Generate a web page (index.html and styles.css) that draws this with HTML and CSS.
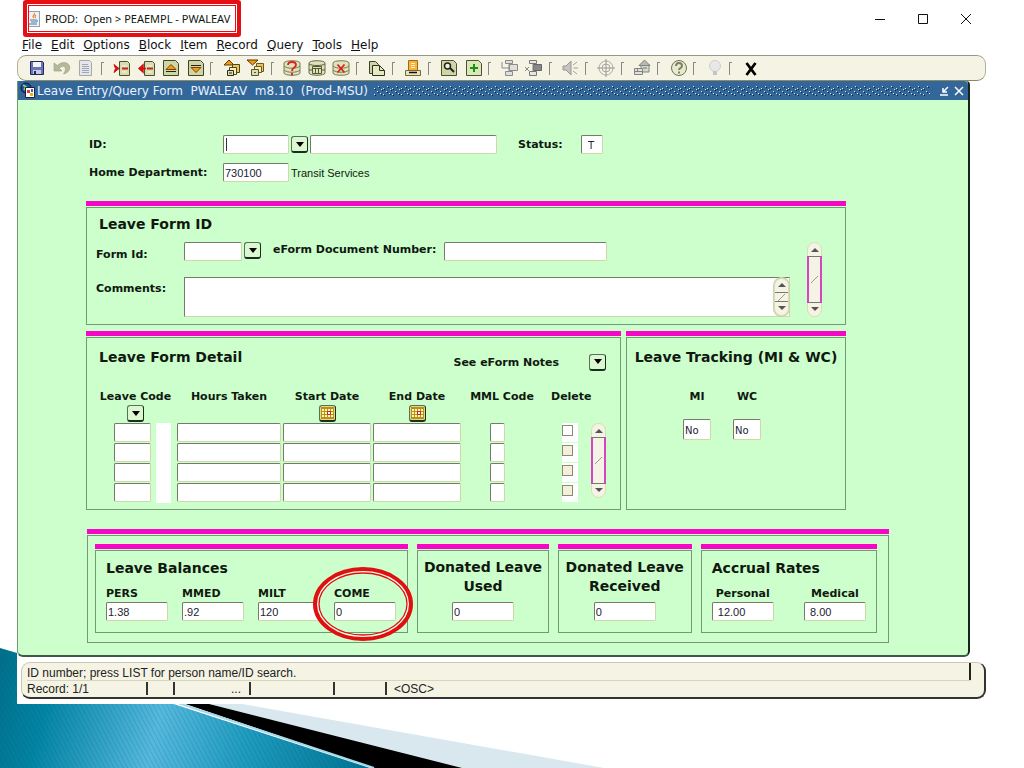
FILE: index.html
```html
<!DOCTYPE html>
<html lang="en">
<head>
<meta charset="utf-8">
<title>PROD: Open &gt; PEAEMPL - PWALEAV</title>
<link rel="stylesheet" href="styles.css">
</head>
<body>
<svg class="backdrop" viewBox="0 0 1024 120" preserveAspectRatio="xMinYMax slice" aria-hidden="true">
  <defs>
    <linearGradient id="teal" x1="0" y1="0" x2="370" y2="90" gradientUnits="userSpaceOnUse">
      <stop offset="0" stop-color="#006f8b"/><stop offset=".15" stop-color="#0384a3"/><stop offset=".45" stop-color="#56b9de"/><stop offset=".7" stop-color="#1d9abd"/><stop offset="1" stop-color="#017593"/>
    </linearGradient>
    <pattern id="weave" width="4" height="6" patternUnits="userSpaceOnUse" patternTransform="rotate(-28)"><path d="M0 0v6" stroke="#00566e" stroke-opacity=".35"/></pattern>
  </defs>
  <path d="M0 0L17 5 370 120H0z" fill="url(#teal)"/>
  <path d="M0 0L17 5 370 120H0z" fill="url(#weave)"/>
  <path d="M209 56L180 45 604 120H440z" fill="#d9e8ef"/>
  <path d="M150 44L209 56 462 120H374z" fill="#000"/>
  <path d="M160 49L374 120" stroke="#a6d8ea" stroke-width="2"/>
</svg>
<main class="app">
  <header class="titlebar">
    <h1 class="callout">
      <svg width="12" height="16" viewBox="0 0 12 16"><rect x=".5" y=".5" width="11" height="15" fill="#eef2f6" stroke="#8ba3b8"/><path d="M6 2c2 2-3 3 0 5M8 4c-2 1 0 2-1 3" fill="none" stroke="#e8822a" stroke-width="1.2"/><path d="M2 9h6M3 11h5M1 13h8M8 9c2 0 2 2 0 2" fill="none" stroke="#4d7899"/></svg>
      <span>PROD:&nbsp; Open &gt; PEAEMPL - PWALEAV</span>
    </h1>
    <div class="win-buttons">
      <button aria-label="Minimize"><svg width="12" height="12"><path d="M1 6.500h10" stroke="#111"/></svg></button>
      <button aria-label="Maximize"><svg width="12" height="12"><path d="M1.500 1.500h9v9h-9z" fill="none" stroke="#111"/></svg></button>
      <button aria-label="Close"><svg width="12" height="12"><path d="M1 1l10 10M11 1L1 11" stroke="#111"/></svg></button>
    </div>
  </header>
  <nav class="menu">
    <a href="#"><u>F</u>ile</a><a href="#"><u>E</u>dit</a><a href="#"><u>O</u>ptions</a><a href="#"><u>B</u>lock</a><a href="#"><u>I</u>tem</a><a href="#"><u>R</u>ecord</a><a href="#"><u>Q</u>uery</a><a href="#"><u>T</u>ools</a><a href="#"><u>H</u>elp</a>
  </nav>
  <div class="toolbar">
    <div class="tools">
      <button aria-label="Save"><svg viewBox="0 0 18 18"><path d="M2.500 2.500h12l1 1v12h-13z" fill="#6a74b8" stroke="#23285e"/><path d="M5 3h8v5H5z" fill="#f2f4fa"/><path d="M5 11h8v4H5z" fill="#c9cde4"/><path d="M6 12h2v3H6z" fill="#23285e"/></svg></button>
      <button aria-label="Undo"><svg viewBox="0 0 18 18"><path d="M1 4v8h8L6.500 9.500C9 6 12.500 7 12.500 10c0 2-1 3-2 5 5-1 7-5 6-8-2-5-9-4-12-.500z" fill="#b4b99c" stroke="#949a80" stroke-width=".6"/></svg></button>
      <button aria-label="Rollback"><svg viewBox="0 0 18 18"><path d="M2.500 1.500h10l2 2v13h-12z" fill="#e4e6ea" stroke="#a6a8ac"/><path d="M5 5.500h6M5 7.500h7M5 9.500h7M5 11.500h7M5 13.500h7" stroke="#a2a6ae"/></svg></button>
      <i class="sep"></i>
      <button aria-label="Insert record"><svg viewBox="0 0 18 18"><path d="M6.500 2.500h8l2 2v12h-10z" fill="#d5dcae" stroke="#4a5030"/><path d="M9 7h5M9 13h5" stroke="#f6f8e0"/><path d="M9 9.500h6" stroke="#c22" stroke-width="2"/><path d="M1 5.500l5 4-5 4 1.500-4z" fill="#d11" stroke="#c11"/></svg></button>
      <button aria-label="Remove record"><svg viewBox="0 0 18 18"><path d="M6.500 2.500h8l2 2v12h-10z" fill="#d5dcae" stroke="#4a5030"/><path d="M9 7h5M9 13h5" stroke="#f6f8e0"/><path d="M9 9.500h6" stroke="#c22" stroke-width="2"/><path d="M1 9.500L5 6v7zM4 9.500h4" fill="#d11" stroke="#c11" stroke-width="1.500"/></svg></button>
      <button aria-label="Previous record"><svg viewBox="0 0 18 18"><path d="M1.500 1.500h12l3 3v12h-15z" fill="#cdd6a4" stroke="#3f4628"/><path d="M4 12.500h10" stroke="#222"/><path d="M4 10.500l5-5 5 5z" fill="#f79b16" stroke="#7a4500"/></svg></button>
      <button aria-label="Next record"><svg viewBox="0 0 18 18"><path d="M1.500 1.500h12l3 3v12h-15z" fill="#cdd6a4" stroke="#3f4628"/><path d="M4 6.500h10" stroke="#222"/><path d="M4 8.500h10l-5 5z" fill="#f79b16" stroke="#7a4500"/></svg></button>
      <i class="sep"></i>
      <button aria-label="Previous block"><svg viewBox="0 0 18 18"><path d="M1 6l5-5 5 5z" fill="#f79b16" stroke="#5d3500"/><path d="M9.500 5.500h7v8h-7z" fill="#e9c56a" stroke="#514412"/><path d="M6.500 8.500h7v7h-7z" fill="#f5edc0" stroke="#514412"/><path d="M4.500 11.500h6v5h-6zM6 14h3" fill="#d9dfb0" stroke="#2c2c18"/></svg></button>
      <button aria-label="Next block"><svg viewBox="0 0 18 18"><path d="M9.500 4.500h7v8h-7z" fill="#e9c56a" stroke="#6b5a18"/><path d="M7.500 7.500h7v6h-7z" fill="#f5edc0" stroke="#6b5a18"/><path d="M4.500 10.500h7v6h-7zM7 13.500h2" fill="#d9dfb0" stroke="#55552c"/><path d="M0 1h11L5.500 6z" fill="#f79b16" stroke="#5d3500"/></svg></button>
      <i class="sep"></i>
      <button aria-label="Enter query"><svg viewBox="0 0 18 18"><path d="M1 4c0-3 16-3 16 0v10c0 3-16 3-16 0z" fill="#dfe3bd" stroke="#777c52"/><path d="M1 7c3 3 13 3 16 0M1 11c3 3 13 3 16 0" fill="none" stroke="#777c52"/><path d="M5 6c0-4 8-4 8 0 0 3-4 2-4 6M9 14v2.500" fill="none" stroke="#dc2020" stroke-width="1.800"/></svg></button>
      <button aria-label="Execute query"><svg viewBox="0 0 18 18"><path d="M1 4c0-3 16-3 16 0v10c0 3-16 3-16 0z" fill="#dfe3bd" stroke="#686d42"/><path d="M1 5c3 2 13 2 16 0M1 11h3M14 11h3M4.500 7.500h9v7h-9zM4.500 9.500h9M7.500 9.500v5M10.500 9.500v5" fill="none" stroke="#555b34"/></svg></button>
      <button aria-label="Cancel query"><svg viewBox="0 0 18 18"><path d="M1 4c0-3 16-3 16 0v10c0 3-16 3-16 0z" fill="#dfe3bd" stroke="#777c52"/><path d="M1 7c3 3 13 3 16 0M1 11c3 3 13 3 16 0" fill="none" stroke="#777c52"/><path d="M5.500 5.500l7 8M12.500 5.500l-7 8" stroke="#dc2020" stroke-width="1.800"/></svg></button>
      <i class="sep"></i>
      <button aria-label="Document"><svg viewBox="0 0 18 18"><path d="M1.500 2.500h6l3 3v9h-9z" fill="#cdd6a4" stroke="#3c4126"/><path d="M4.500 6.500h7l5 5v5h-12z" fill="#e6eac4" stroke="#2f331c"/><path d="M11.500 6.500v5h5" fill="none" stroke="#2f331c"/></svg></button>
      <i class="sep"></i>
      <button aria-label="Print"><svg viewBox="0 0 18 18"><path d="M4.500 1.500h9v10h-9z" fill="#fbb03b" stroke="#a46a10"/><path d="M7 4.500h4M7 6.500h4M7 8.500h4" stroke="#fff3c0"/><path d="M1.500 11.500h15v5h-15z" fill="#e6e4b8" stroke="#6f6a3a"/><path d="M5 13.500h8" stroke="#111" stroke-width="1.500"/></svg></button>
      <i class="sep"></i>
      <button aria-label="View"><svg viewBox="0 0 18 18"><path d="M1.500 1.500h12l3 3v12h-15z" fill="#cdd6a4" stroke="#4c5230"/><circle cx="7.500" cy="7" r="3" fill="#eef0d8" stroke="#222" stroke-width="1.500"/><path d="M10 9l4 4" stroke="#222" stroke-width="2"/></svg></button>
      <button aria-label="Add"><svg viewBox="0 0 18 18"><path d="M1.500 1.500h12l3 3v12h-15z" fill="#dbe6b8" stroke="#4c5230"/><path d="M9 5v8M5 9h8" stroke="#159315" stroke-width="2"/></svg></button>
      <i class="sep"></i>
      <button aria-label="Workflow submit"><svg viewBox="0 0 18 18"><path d="M1 3v6h7M8 5v7" fill="none" stroke="#8b8b88"/><path d="M4.500 1.500h7v3h-7zM8.500 5.500h8v6h-8zM4.500 12.500h7v4h-7z" fill="#dededa" stroke="#8b8b88"/></svg></button>
      <button aria-label="Workflow release"><svg viewBox="0 0 18 18"><path d="M4.500 1.500h7v3h-7zM4.500 12.500h7v4h-7z" fill="#e8e8e0" stroke="#777"/><path d="M8.500 5.500h8v6h-8z" fill="#888" stroke="#666"/><path d="M0 8l4 4M4 8l-4 4M8 5v7" stroke="#888"/></svg></button>
      <i class="sep"></i>
      <button aria-label="Broadcast"><svg viewBox="0 0 18 18"><path d="M2 7h3l5-5v14l-5-5H2z" fill="#c4c4c0" stroke="#969694"/><path d="M12 6l4-3M12.500 9H17M12 12l4 3" stroke="#a0a09c"/></svg></button>
      <i class="sep"></i>
      <button aria-label="Target"><svg viewBox="0 0 18 18"><circle cx="9" cy="9" r="7" fill="none" stroke="#aaa9a5"/><circle cx="9" cy="9" r="4" fill="none" stroke="#aaa9a5"/><path d="M9 0v18M0 9h18" stroke="#999894"/></svg></button>
      <i class="sep"></i>
      <button aria-label="Home"><svg viewBox="0 0 18 18"><path d="M8 6v7h8V5" fill="#d6d6d2" stroke="#83837f"/><path d="M6 6.500l5.500-5.500L17 6.500z" fill="#b8b8b4" stroke="#83837f"/><path d="M10 9h4" stroke="#777"/><path d="M1.500 9.500h8v6h-8zM1 12.500h9M4.500 9v3" fill="#e1e1dc" stroke="#83837f"/></svg></button>
      <i class="sep"></i>
      <button aria-label="Help"><svg viewBox="0 0 18 18"><circle cx="9" cy="9" r="7.500" fill="#e8ead0" stroke="#6f7454"/><path d="M6 7c0-4 6-4 6 0 0 2-3 2-3 4M9 12.500v2" fill="none" stroke="#7c8160" stroke-width="2"/></svg></button>
      <i class="sep"></i>
      <button aria-label="Hint"><svg viewBox="0 0 18 18"><circle cx="9" cy="7" r="5.500" fill="#e8e8e8" stroke="#cfcfcf"/><path d="M7 12h4v4H7z" fill="#c4c4c4"/></svg></button>
      <i class="sep"></i>
      <button aria-label="Exit"><svg viewBox="0 0 18 18"><path d="M4.500 4l9 12M13.500 4l-9 12" stroke="#000" stroke-width="2.800"/></svg></button>
    </div>
  </div>

  <section class="form-window">
    <div class="form-title">
      <svg width="16" height="17" viewBox="0 0 16 17"><circle cx="6" cy="6" r="5" fill="#234a9c" stroke="#0a183c"/><path d="M3 3l3 2-2 3" stroke="#7ad07a" stroke-width="2" fill="none"/><path d="M5.500 5.500h9v10h-9z" fill="#fff" stroke="#222"/><path d="M7 8h3v3H7z" fill="#e33"/><path d="M10 11h3v3h-3z" fill="#e9b21c"/><path d="M11 7h2v3h-2z" fill="#36c"/></svg>
      <h2>Leave Entry/Query Form&nbsp; PWALEAV&nbsp; m8.10&nbsp; (Prod-MSU)</h2>
      <svg class="grip" height="12"><defs><pattern id="dots" width="9" height="12" patternUnits="userSpaceOnUse"><g fill="#0b2040"><path d="M1 4h1v1H1zM4 7h1v1H4zM1 10h1v1H1zM5 2h1v1H5zM8 5h1v1H8zM7 9h1v1H7z"/></g><g fill="#d3f0ea"><path d="M0 3h1v1H0zM3 6h1v1H3zM0 9h1v1H0zM4 1h1v1H4zM7 4h1v1H7zM6 8h1v1H6z"/></g></pattern></defs><rect width="100%" height="12" fill="url(#dots)"/></svg>
      <button aria-label="Restore form"><svg width="10" height="10"><path d="M9 1L4 6M4 2v4h4M1 9h8" fill="none" stroke="#fff" stroke-width="1.500"/></svg></button>
      <button aria-label="Close form"><svg width="10" height="10"><path d="M1 1l8 8M9 1L1 9" stroke="#fff" stroke-width="1.500"/></svg></button>
    </div>

    <form class="form-body">
      <div class="key-row">
        <label class="key-label" for="pid">ID:</label>
        <input class="field w-key caret" id="pid">
        <button type="button" class="lov" aria-label="List IDs"></button>
        <input class="field w-name" aria-label="Name">
        <label class="status-label" for="status">Status:</label>
        <input class="field w-flag" id="status" value="T">
      </div>
      <div class="key-row">
        <label class="key-label" for="dept">Home Department:</label>
        <input class="field w-key" id="dept" value="730100">
        <span class="small">Transit Services</span>
      </div>

      <section class="panel form-id">
        <div class="frame with-scroll">
          <div class="grow">
            <h3>Leave Form ID</h3>
            <div class="id-row">
              <label class="id-label low" for="formid">Form Id:</label>
              <input class="field w-form" id="formid">
              <button type="button" class="lov" aria-label="List forms"></button>
              <label class="doc-label" for="docno">eForm Document Number:</label>
              <input class="field w-doc" id="docno">
            </div>
            <div class="id-row">
              <label class="id-label" for="comments">Comments:</label>
              <div class="comment-box">
                <textarea id="comments"></textarea>
                <div class="mini-scroll"><b class="up"></b><b class="thumb"></b><b class="down"></b></div>
              </div>
            </div>
          </div>
          <div class="scroll"><b class="up"></b><b class="thumb"></b><b class="down"></b></div>
        </div>
      </section>

      <div class="middle">
        <section class="panel">
          <div class="frame detail">
            <div class="detail-head">
              <h3>Leave Form Detail</h3>
              <label for="notes">See eForm Notes</label>
              <button type="button" id="notes" class="lov"></button>
            </div>
            <div class="table-row">
              <table>
                <colgroup><col class="c-code"><col class="c-hours"><col class="c-date"><col class="c-date"><col class="c-mml"><col class="c-del"></colgroup>
                <thead><tr>
                  <th>Leave Code<button type="button" class="lov" aria-label="List leave codes"></button></th>
                  <th>Hours Taken</th>
                  <th>Start Date<button type="button" class="cal" aria-label="Pick start date"><svg width="13" height="12"><path d="M0 0h13v12H0z" fill="#b8901c"/><path d="M1 2h2v2H1zM4 2h2v2H4zM7 2h2v2H7zM10 2h2v2h-2zM1 5h2v2H1zM4 5h2v2H4zM10 5h2v2h-2zM1 8h2v2H1zM4 8h2v2H4zM7 8h2v2H7zM10 8h2v2h-2z" fill="#fff8b0"/><path d="M6.500 4.500h3v3h-3z" fill="#fff" stroke="#c22"/></svg></button></th>
                  <th>End Date<button type="button" class="cal" aria-label="Pick end date"><svg width="13" height="12"><path d="M0 0h13v12H0z" fill="#b8901c"/><path d="M1 2h2v2H1zM4 2h2v2H4zM7 2h2v2H7zM10 2h2v2h-2zM1 5h2v2H1zM4 5h2v2H4zM10 5h2v2h-2zM1 8h2v2H1zM4 8h2v2H4zM7 8h2v2H7zM10 8h2v2h-2z" fill="#fff8b0"/><path d="M6.500 4.500h3v3h-3z" fill="#fff" stroke="#c22"/></svg></button></th>
                  <th>MML Code</th>
                  <th>Delete</th>
                </tr></thead>
                <tbody>
                  <tr><td><div class="code"><input class="field" aria-label="Leave code 1"><i></i></div></td><td><input class="field" aria-label="Hours 1"></td><td><input class="field" aria-label="Start 1"></td><td><input class="field" aria-label="End 1"></td><td class="mml"><input class="field" aria-label="MML 1"></td><td><span class="tick"><input type="checkbox" aria-label="Delete 1"></span></td></tr>
                  <tr><td><div class="code"><input class="field" aria-label="Leave code 2"><i></i></div></td><td><input class="field" aria-label="Hours 2"></td><td><input class="field" aria-label="Start 2"></td><td><input class="field" aria-label="End 2"></td><td class="mml"><input class="field" aria-label="MML 2"></td><td><span class="tick off"><input type="checkbox" aria-label="Delete 2"></span></td></tr>
                  <tr><td><div class="code"><input class="field" aria-label="Leave code 3"><i></i></div></td><td><input class="field" aria-label="Hours 3"></td><td><input class="field" aria-label="Start 3"></td><td><input class="field" aria-label="End 3"></td><td class="mml"><input class="field" aria-label="MML 3"></td><td><span class="tick off"><input type="checkbox" aria-label="Delete 3"></span></td></tr>
                  <tr><td><div class="code"><input class="field" aria-label="Leave code 4"><i></i></div></td><td><input class="field" aria-label="Hours 4"></td><td><input class="field" aria-label="Start 4"></td><td><input class="field" aria-label="End 4"></td><td class="mml"><input class="field" aria-label="MML 4"></td><td><span class="tick off"><input type="checkbox" aria-label="Delete 4"></span></td></tr>
                </tbody>
              </table>
              <div class="scroll"><b class="up"></b><b class="thumb"></b><b class="down"></b></div>
            </div>
          </div>
        </section>
        <section class="panel">
          <div class="frame tracking">
            <h3>Leave Tracking (MI &amp; WC)</h3>
            <div class="flags">
              <div class="flag"><label for="mi">MI</label><input class="field" id="mi" value="No"></div>
              <div class="flag"><label for="wc">WC</label><input class="field" id="wc" value="No"></div>
            </div>
          </div>
        </section>
      </div>

      <section class="panel totals">
        <div class="frame totals-grid">
          <section class="panel">
            <div class="frame sub">
              <h3>Leave Balances</h3>
              <div class="amounts">
                <div class="amount"><label for="pers">PERS</label><input class="field" id="pers" value="1.38"></div>
                <div class="amount"><label for="mmed">MMED</label><input class="field" id="mmed" value=".92"></div>
                <div class="amount"><label for="milt">MILT</label><input class="field" id="milt" value="120"></div>
                <div class="amount"><label for="come">COME</label><input class="field" id="come" value="0">
                  <svg class="ring" viewBox="0 0 100 74" aria-hidden="true"><ellipse cx="50" cy="37" rx="45" ry="32" fill="none" stroke="#f4fff0" stroke-width="2"/><ellipse cx="50" cy="37" rx="48" ry="35" fill="none" stroke="#e01010" stroke-width="4"/><ellipse cx="50" cy="37" rx="44" ry="31" fill="none" stroke="#e01010" stroke-width="1.300"/></svg>
                </div>
              </div>
            </div>
          </section>
          <section class="panel">
            <div class="frame sub donated">
              <h3><label for="used">Donated Leave<br>Used</label></h3>
              <input class="field" id="used" value="0">
            </div>
          </section>
          <section class="panel">
            <div class="frame sub donated">
              <h3><label for="received">Donated Leave<br>Received</label></h3>
              <input class="field" id="received" value="0">
            </div>
          </section>
          <section class="panel">
            <div class="frame sub accrual">
              <h3>Accrual Rates</h3>
              <div class="amounts">
                <div class="amount"><label for="personal">Personal</label><input class="field" id="personal" value="12.00"></div>
                <div class="amount"><label for="medical">Medical</label><input class="field" id="medical" value="8.00"></div>
              </div>
            </div>
          </section>
        </div>
      </section>
    </form>
  </section>

  <footer class="status">
    <div class="hint"><span>ID number; press LIST for person name/ID search.</span></div>
    <div class="cells"><span class="s1">Record: 1/1</span><span class="s2"></span><span class="s3">...</span><span class="s4"></span><span class="s5"></span><span>&lt;OSC&gt;</span></div>
  </footer>
</main>
</body>
</html>
```
FILE: styles.css
```css
* { box-sizing: border-box; }
body {
  margin: 0;
  min-height: 100vh;
  background: #fff;
  color: #101810;
  font: 12px "DejaVu Sans", Verdana, sans-serif;
}
button { margin: 0; padding: 0; border: 0; background: none; font: inherit; }
h1, h2, h3 { margin: 0; }
svg { display: block; }

.backdrop { position: fixed; left: 0; bottom: 0; width: 100%; height: 120px; }

.app { position: relative; margin: 0 38px 0 17px; padding-bottom: 5px; background: #fff; }

/* window chrome */
.titlebar { display: flex; justify-content: space-between; align-items: center; height: 37px; padding: 0 14px 0 6px; }
.callout {
  position: relative;
  display: flex; align-items: center; gap: 5px;
  height: 37px; padding: 0 7px 0 1px;
  border: 4px solid #e60f14; border-radius: 3px;
  font: 11px "Noto Sans", "Open Sans", sans-serif;
  white-space: nowrap;
}
.callout::after { content: ""; position: absolute; inset: 1px; border: 1px solid #e60f14; }
.win-buttons { display: flex; gap: 31px; }

.menu { display: flex; gap: 9px; height: 18px; padding-left: 5px; line-height: 16px; }
.menu a { color: #111; text-decoration: none; }

.toolbar { height: 26px; padding: 1px 9px; border: 1px solid; border-color: #99968a #b5b294 #8c8a66; border-radius: 9px; background: #f5f4e4; }
.tools { display: flex; justify-content: space-between; align-items: center; max-width: 734px; }
.tools button { width: 20px; height: 22px; padding: 2px 1px; }
.sep { width: 7px; height: 13px; border-left: 1px solid #888; background: linear-gradient(#888, #888) 0 0 / 2px 1px no-repeat; }

/* form window */
.form-window { margin-right: 16px; border: 1px solid #6f9a70; border-top: 0; border-right: 2px solid #14251a; border-bottom: 2px solid #3d5a45; border-radius: 0 4px 6px 6px; background: #ccffcc; }
.form-title { display: flex; align-items: center; gap: 5px; height: 19px; padding: 0 4px 0 2px; background: #336699; color: #e6f2ff; border-radius: 0 4px 0 0; }
.form-title h2 { margin-left: -4px; font-size: 12px; font-weight: normal; white-space: nowrap; }
.grip { flex: 1; min-width: 0; margin: 0 4px 0 1px; }

.form-body { padding: 35px 79px 12px 68px; font-size: 11px; font-weight: bold; }
.field, textarea {
  height: 19px; margin: 0; padding: 1px 0 0 1px;
  border: 1px solid; border-color: #77796b #cfd8a8 #cfd8a8 #77796b; border-radius: 2px;
  background: #fff; color: #223;
  font: 11px "Liberation Sans", Arial, sans-serif;
}
.small { font: 11px "Liberation Sans", Arial, sans-serif; }
.lov, .cal {
  flex: none; display: block; width: 17px; height: 17px;
  border: 1px solid #56705a; border-right-color: #16301c; border-bottom: 2px solid #16301c; border-radius: 3px;
  background: #dcf8d0;
}
.lov::before { content: ""; display: block; width: 0; margin: 0 auto; border: 4px solid transparent; border-top: 5px solid #000; border-bottom: 0; }
.cal { padding: 1px; background: #e6d885; overflow: hidden; }

.key-row { display: flex; align-items: center; gap: 2px; margin-bottom: 9px; padding-left: 3px; }
.key-label { width: 132px; }
.w-key { width: 66px; }
.caret { background: linear-gradient(#333, #333) 2px 2px / 1px 13px no-repeat #fff; }
.w-name { width: 187px; }
.status-label { width: 61px; margin-left: 19px; }
.w-flag { width: 22px; padding-left: 6px; }

.panel { padding-top: 1px; border-top: 5px solid #f806c8; }
.panel h3 { font-size: 14px; line-height: 20px; }
.frame { height: 100%; border: 1px solid #739a77; }

.form-id { margin: 19px 43px 6px 0; }
.with-scroll { display: flex; align-items: flex-end; gap: 17px; padding: 6px 23px 7px 9px; }
.grow { flex: 1; }
.grow h3 { padding-left: 3px; margin-bottom: 8px; }
.id-row { display: flex; gap: 2px; }
.id-row + .id-row { margin-top: 16px; }
.id-label { width: 86px; padding-top: 5px; }
.low { align-self: flex-end; }
.w-form { width: 58px; }
.doc-label { margin: 1px 6px 0 10px; }
.w-doc { width: 163px; }
.comment-box { display: flex; flex: 1; height: 40px; border: 1px solid; border-color: #77796b #cfd8a8 #cfd8a8 #77796b; background: #fff; }
.comment-box textarea { flex: 1; min-width: 0; height: 100%; border: 0; resize: none; }

/* scroll gutters */
.scroll, .mini-scroll { display: flex; flex-direction: column; width: 15px; height: 75px; border: 1px solid #d9dcb4; border-radius: 8px; background: #f5f4e4; }
.mini-scroll { height: 100%; box-shadow: 0 0 0 1px #cdd0a8; }
.up, .down { height: 13px; }
.up::before, .down::before { content: ""; display: block; width: 0; margin: 5px auto 0; border: 4px solid transparent; border-top-width: 0; border-bottom: 4px solid #555; }
.down::before { border-top: 4px solid #555; border-bottom-width: 0; margin-top: 4px; }
.thumb { flex: 1; margin: 0 -1px; border: 2px solid #d944c4; border-top: 1px solid #777; border-bottom: 1px solid #777; background: linear-gradient(135deg, transparent 43%, #999 44% 54%, transparent 55%) center / 7px 7px no-repeat #f5f4e4; }
.mini-scroll .thumb { border-left: 0; border-right: 0; margin: 0; }
.mini-scroll .up::before { margin-top: 4px; }

.middle { display: grid; grid-template-columns: 535fr 220fr; gap: 5px; margin: 0 43px 19px 0; }
.detail { padding: 9px 14px 6px 8px; }
.detail-head { display: flex; align-items: center; height: 30px; margin-bottom: 12px; }
.detail-head h3 { flex: 1; padding-left: 4px; margin-bottom: 10px; }
.detail-head label { margin-right: 30px; }
.table-row { display: flex; align-items: flex-end; justify-content: space-between; }
.table-row .scroll { margin-bottom: 5px; }
table { width: 496px; table-layout: fixed; border-collapse: collapse; }
.c-code { width: 81px; } .c-hours { width: 106px; } .c-date { width: 90px; } .c-mml { width: 80px; }
th { height: 34px; padding: 0; font-size: 11px; line-height: 16px; vertical-align: top; white-space: nowrap; }
th .lov, th .cal { margin: 0 auto; }
td { height: 20px; padding: 0 1px; line-height: 0; vertical-align: top; }
td .field { display: block; width: 100%; }
.mml { padding: 0 40px 0 28px; }
td.mml .field { width: 15px; }
th:last-child { padding-left: 9px; }
td:last-child { padding-left: 20px; }
.code { display: flex; gap: 5px; padding-left: 18px; }
.code .field { width: 37px; }
.code i { width: 15px; height: 20px; background: #fff; }
.tick { display: block; width: 16px; height: 19px; padding-top: 2px; background: #fff; }
.tick input { appearance: none; display: block; width: 11px; height: 11px; margin: 0; border: 1px solid #8a8a76; background: #fff; }
.off input { background: #f4efd9; }

.tracking { padding: 9px 5px; text-align: center; }
.tracking h3 { white-space: nowrap; }
.flags { display: flex; justify-content: center; gap: 22px; margin-top: 22px; padding-right: 28px; }
.flag { display: flex; flex-direction: column; align-items: center; gap: 14px; line-height: 16px; }
.flag .field { width: 28px; height: 21px; }
.flag .field, .w-flag { font-family: "DejaVu Sans", Verdana, sans-serif; font-size: 10px; }

.totals { margin-left: 1px; }
.totals-grid { display: grid; grid-template-columns: 313fr 131fr 134fr 176fr; gap: 9px; padding: 8px 11px 9px 7px; }
.sub { padding: 7px 10px 11px; }
.amounts { display: flex; gap: 14px; }
.amount { position: relative; display: flex; flex-direction: column; width: 62px; }
.amount label { line-height: 17px; margin-top: 7px; }
.ring { position: absolute; left: -21px; top: -11px; width: 100px; height: 74px; }
.donated { display: flex; flex-direction: column; align-items: center; padding-inline: 0; text-align: center; white-space: nowrap; }
.panel .donated h3 { line-height: 19px; }
.donated .field { width: 62px; margin-top: 6px; }
.accrual .amounts { justify-content: space-between; }
.accrual .amount { text-align: center; }
.accrual .field { padding-left: 5px; }

/* message and status lines */
.status { margin: 5px 0 0 4px; border: 1px solid #c9c8b0; border-right: 2px solid #333; border-bottom: 2px solid #333; border-radius: 9px; background: #f5f4e4; color: #222; font: 12px "Liberation Sans", Arial, sans-serif; }
.hint { display: flex; height: 18px; margin: 0 13px 0 5px; border-bottom: 1px solid #d6d6c0; line-height: 20px; }
.hint span { flex: 1; border-right: 2px solid #222; }
.cells { display: flex; height: 16px; padding: 1px 0 2px 5px; line-height: 14px; }
.cells span { padding-left: 7px; }
.cells span:not(:last-child) { border-right: 2px solid #333; }
.cells .s1 { width: 121px; padding-left: 0; }
.s2 { width: 27px; } .s3 { width: 76px; text-align: right; } .s4 { width: 84px; } .s5 { width: 52px; }
.cells .s3 { padding-right: 8px; }
```
